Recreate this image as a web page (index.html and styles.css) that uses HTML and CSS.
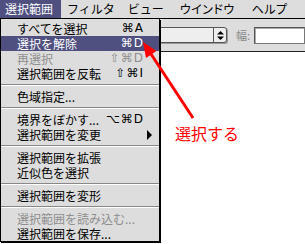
FILE: index.html
```html
<!DOCTYPE html>
<html lang="ja">
<head>
  <meta charset="UTF-8" />
  <title>選択範囲メニュー</title>
  <link rel="stylesheet" href="styles.css">
</head>
<body>

<div class="screen">
  <!-- メニューバー -->
  <div class="menubar">
    <span class="mb-item active">選択範囲</span>
    <span class="mb-item">フィルタ</span>
    <span class="mb-item">ビュー</span>
    <span class="mb-item kana">ウインドウ</span>
    <span class="mb-item kana">ヘルプ</span>
  </div>

  <!-- オプションバー -->
  <div class="toolbar">
    <div class="popup">
      <span class="popup-btn">
        <svg width="7" height="9" viewBox="0 0 7 9"><path d="M3.5 0L7 3.5H0z M3.5 9L0 5.5H7z" fill="#000"/></svg>
      </span>
    </div>
    <span class="field-label">幅:</span>
    <div class="field"></div>
  </div>

  <div class="canvas"></div>

  <!-- プルダウンメニュー -->
  <div class="menu">
    <div class="item"><span>すべてを選択</span><span class="key">⌘A</span></div>
    <div class="item selected"><span>選択を解除</span><span class="key">⌘D</span></div>
    <div class="item disabled"><span>再選択</span><span class="key">⇧⌘D</span></div>
    <div class="item"><span>選択範囲を反転</span><span class="key">⇧⌘I</span></div>
    <div class="sep"></div>
    <div class="item"><span>色域指定...</span></div>
    <div class="sep"></div>
    <div class="item"><span>境界をぼかす...</span><span class="key">⌥⌘D</span></div>
    <div class="item"><span>選択範囲を変更</span><span class="sub"></span></div>
    <div class="sep"></div>
    <div class="item"><span>選択範囲を拡張</span></div>
    <div class="item"><span>近似色を選択</span></div>
    <div class="sep"></div>
    <div class="item"><span>選択範囲を変形</span></div>
    <div class="sep"></div>
    <div class="item disabled"><span>選択範囲を読み込む...</span></div>
    <div class="item"><span>選択範囲を保存...</span></div>
  </div>

  <!-- 注釈 -->
  <svg class="arrow" width="305" height="244" viewBox="0 0 305 244">
    <line x1="193" y1="118" x2="151" y2="54" stroke="#ff0000" stroke-width="3"/>
    <polygon points="143,42 156.5,51 146,58" fill="#ff0000"/>
  </svg>
  <div class="note">選択する</div>
</div>

</body>
</html>
```

FILE: styles.css
```css
* {
  margin: 0;
  padding: 0;
  box-sizing: border-box;
  font-family: 'Noto Sans CJK JP', sans-serif;
}

body {
  background: #fff;
}

.screen {
  width: 305px;
  height: 244px;
  position: relative;
  overflow: hidden;
  display: flex;
  flex-direction: column;
}

.menubar {
  height: 19px;
  background: #dddddd;
  border-bottom: 1px solid #000;
  display: flex;
  font-size: 12px;
  line-height: 18px;
}

.mb-item {
  padding: 0 7px 0 6px;
  color: #000;
}

.mb-item.kana {
  font-feature-settings: "palt";
  letter-spacing: 0.5px;
  padding: 0 8px 0 9px;
}

.mb-item.active {
  background: #4f4f80;
  color: #fff;
  padding: 0 8px 0 5px;
}

.toolbar {
  height: 33px;
  background: #dddddd;
  border-bottom: 1px solid #222;
  display: flex;
  align-items: center;
  padding-left: 100px;
}

.popup {
  width: 127px;
  height: 16px;
  background: #eeeeee;
  border: 1px solid #555;
  border-radius: 3px;
  box-shadow: 1px 1px 0 #999;
  display: flex;
  justify-content: flex-end;
}

.popup-btn {
  width: 13px;
  border-left: 1px solid #555;
  display: flex;
  align-items: center;
  justify-content: center;
}

.field-label {
  margin-left: 9px;
  font-size: 11px;
  color: #8a8a8a;
}

.field {
  margin-left: 4px;
  flex: 1;
  height: 17px;
  background: #fff;
  border: 1px solid #777;
  border-top-color: #555;
  border-left-color: #555;
  box-shadow: inset 1px 1px 0 #aaa;
}

.canvas {
  flex: 1;
  background: #fff;
}

.menu {
  position: absolute;
  top: 19px;
  left: 0;
  width: 160px;
  padding-top: 2px;
  background: #dddddd;
  border: 1px solid #000;
  border-top: none;
  box-shadow: 1px 1px 0 #000;
  font-size: 12px;
}

.item {
  height: 15px;
  line-height: 15px;
  padding: 0 16px 0 16px;
  display: flex;
  justify-content: space-between;
  align-items: center;
  color: #000;
}

.item.selected {
  background: #4f4f80;
  color: #fff;
}

.item.disabled {
  color: #8f8f8f;
}

.key {
  font-family: 'DejaVu Sans', sans-serif;
  font-size: 12px;
  letter-spacing: 1px;
  margin-right: -1px;
}

.sub {
  width: 0;
  height: 0;
  margin-right: -9px;
  border-left: 5px solid #000;
  border-top: 5px solid transparent;
  border-bottom: 5px solid transparent;
}

.sep {
  height: 8px;
  padding-top: 3px;
}

.sep::before {
  content: "";
  display: block;
  border-top: 1px solid #888;
  border-bottom: 1px solid #fff;
}

.arrow {
  position: absolute;
  top: 0;
  left: 0;
  pointer-events: none;
}

.note {
  position: absolute;
  left: 175px;
  top: 124px;
  font-size: 16px;
  line-height: 18px;
  color: #ff0000;
}
```
